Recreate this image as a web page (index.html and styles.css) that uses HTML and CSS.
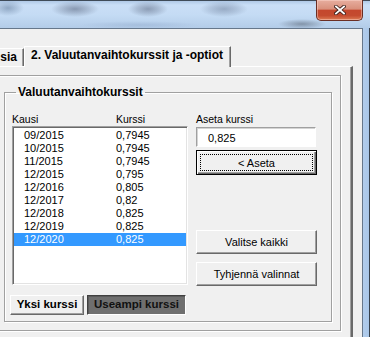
FILE: index.html
```html
<!DOCTYPE html>
<html lang="fi">
<head>
    <meta charset="UTF-8">
    <meta name="viewport" content="width=device-width, initial-scale=1.0">
    <title>Valuutanvaihtokurssit</title>
    <link rel="stylesheet" href="styles.css">
</head>
<body>
    <div class="window">
        <div class="titlebar">
            <div class="close-btn">
                <svg width="12" height="10" viewBox="0 0 12 10">
                    <path d="M2 1.5 L10 8.5 M10 1.5 L2 8.5" stroke="#3b1d18" stroke-width="3.6" stroke-linecap="square" fill="none"/>
                    <path d="M2 1.5 L10 8.5 M10 1.5 L2 8.5" stroke="#fff" stroke-width="1.9" stroke-linecap="square" fill="none"/>
                </svg>
            </div>
        </div>
        <div class="window-body">
            <div class="client">
                <div class="tab-strip">
                    <div class="tab tab-back">isia</div>
                    <div class="tab tab-active">2. Valuutanvaihtokurssit ja -optiot</div>
                </div>
                <div class="tab-page">
                    <div class="frame">
                        <fieldset class="group">
                            <legend>Valuutanvaihtokurssit</legend>
                            <div class="group-body">
                                <div class="rates">
                                    <div class="rates-head"><span>Kausi</span><span>Kurssi</span></div>
                                    <div class="listbox">
                                        <div class="row"><span>09/2015</span><span>0,7945</span></div>
                                        <div class="row"><span>10/2015</span><span>0,7945</span></div>
                                        <div class="row"><span>11/2015</span><span>0,7945</span></div>
                                        <div class="row"><span>12/2015</span><span>0,795</span></div>
                                        <div class="row"><span>12/2016</span><span>0,805</span></div>
                                        <div class="row"><span>12/2017</span><span>0,82</span></div>
                                        <div class="row"><span>12/2018</span><span>0,825</span></div>
                                        <div class="row"><span>12/2019</span><span>0,825</span></div>
                                        <div class="row selected"><span>12/2020</span><span>0,825</span></div>
                                    </div>
                                    <div class="mode-buttons">
                                        <button class="mode-btn">Yksi kurssi</button>
                                        <button class="mode-btn pressed">Useampi kurssi</button>
                                    </div>
                                </div>
                                <div class="actions">
                                    <label class="field-label" for="rate">Aseta kurssi</label>
                                    <input type="text" id="rate" class="textbox" value="0,825">
                                    <button class="btn btn-default">&lt; Aseta</button>
                                    <button class="btn btn-select">Valitse kaikki</button>
                                    <button class="btn btn-clear">Tyhjennä valinnat</button>
                                </div>
                            </div>
                        </fieldset>
                    </div>
                </div>
            </div>
            <div class="window-edge"></div>
        </div>
    </div>
</body>
</html>
```

FILE: styles.css
```css
/* Classic Windows dialog look */
* {
    box-sizing: border-box;
}

html, body {
    margin: 0;
    padding: 0;
}

body {
    width: 370px;
    height: 337px;
    overflow: hidden;
    background: #f0f0f0;
    font-family: "Liberation Sans", Arial, sans-serif;
    font-size: 11px;
    color: #000;
}

/* window starts left of the visible area */
.window {
    width: 390px;
    margin-left: -20px;
}

/* blurred glass title bar */
.titlebar {
    height: 28px;
    display: flex;
    justify-content: flex-end;
    padding-right: 7px;
    box-shadow: inset 0 1px 0 #3f4b58;
    background:
        radial-gradient(ellipse 16px 8px at 28px 8px, rgba(120, 145, 175, 0.7), rgba(120, 145, 175, 0.35) 50%, transparent),
        radial-gradient(ellipse 24px 8px at 95px 9px, rgba(115, 130, 155, 0.75), rgba(115, 130, 155, 0.35) 55%, transparent),
        radial-gradient(ellipse 20px 8px at 168px 9px, rgba(115, 130, 155, 0.7), rgba(115, 130, 155, 0.35) 55%, transparent),
        radial-gradient(ellipse 24px 8px at 244px 9px, rgba(120, 138, 165, 0.6), rgba(120, 138, 165, 0.3) 55%, transparent),
        radial-gradient(ellipse 24px 5px at 322px 24px, rgba(95, 108, 125, 0.6), transparent),
        radial-gradient(ellipse 60px 4px at 160px 25px, rgba(140, 165, 200, 0.4), transparent),
        linear-gradient(#a9c3e2, #c9def6 5px, #c4dbf4 15px, #b4cde9 27px);
}

.close-btn {
    width: 47px;
    height: 21px;
    display: flex;
    align-items: center;
    justify-content: center;
    border: 1px solid #6a2e24;
    border-top: none;
    border-radius: 0 0 5px 5px;
    background: linear-gradient(#e7ae9f 0%, #d9907c 45%, #c4472d 52%, #c44b2f 78%, #dd7c55 100%);
    box-shadow: inset 0 0 0 1px rgba(255, 220, 210, 0.45);
}

.window-body {
    display: flex;
    height: 309px;
}

.client {
    flex: 1;
    border-top: 1px solid #66778b;
    border-right: 1px solid #66778b;
    background: #f0f0f0;
    padding: 17px 9px 0 0;
    overflow: hidden;
}

.window-edge {
    width: 7px;
    background: linear-gradient(to right, #b2cdec 0, #a9c6e8 6px, #37414d 6px);
}

/* Tabs */
.tab-strip {
    display: flex;
    align-items: flex-end;
    height: 20px;
    margin-left: 6px;
}

.tab {
    border: 1px solid #fff;
    border-right: 1px solid #696969;
    border-bottom: none;
    box-shadow: inset -1px 0 0 #a0a0a0;
    background: #f0f0f0;
    font-weight: bold;
    font-size: 12px;
    white-space: nowrap;
}

.tab-back {
    width: 38px;
    height: 18px;
    line-height: 17px;
    text-align: right;
    padding-right: 6px;
}

.tab-active {
    position: relative;
    z-index: 1;
    height: 21px;
    margin-bottom: -1px;
    line-height: 16px;
    padding: 0 7px 0 6px;
}

.tab-page {
    margin-left: 4px;
    height: 300px;
    border-top: 1px solid #fff;
    border-left: 1px solid #fff;
    border-right: 2px solid #696969;
    box-shadow: inset -1px 0 0 #a0a0a0;
    padding-top: 8px;
}

/* etched borders */
.frame,
.group {
    border: 1px solid #a0a0a0;
    box-shadow: inset 1px 1px 0 #fff, 1px 1px 0 #fff;
}

.frame {
    margin: 0 10px 10px 10px;
}

.group {
    margin: 9px 8px 8px 8px;
    padding: 0 0 6px 7px;
    min-width: 0;
}

.group legend {
    margin-left: 4px;
    padding: 0 2px;
    font-weight: bold;
    font-size: 12px;
    line-height: 14px;
}

.group-body {
    display: grid;
    grid-template-columns: 176px 121px;
    column-gap: 8px;
    padding-top: 13px;
}

/* list side */
.rates-head {
    display: grid;
    grid-template-columns: 104px auto;
    height: 14px;
    line-height: 14px;
    font-size: 10.5px;
}

.listbox {
    height: 159px;
    background: #fff;
    border: 1px solid;
    border-color: #a0a0a0 #fff #fff #a0a0a0;
    box-shadow: inset 1px 1px 0 #696969, inset -1px -1px 0 #e3e3e3;
    padding: 2px 1px 1px 1px;
}

.row {
    display: grid;
    grid-template-columns: 92px auto;
    height: 13px;
    line-height: 13px;
    padding-left: 10px;
}

.row.selected {
    background: #3399ff;
    color: #fff;
}

.mode-buttons {
    display: flex;
    gap: 3px;
    margin: 10px 0 0 -2px;
}

.mode-btn {
    height: 20px;
    padding: 0 0 1px 0;
    font-family: inherit;
    font-size: 11.5px;
    font-weight: bold;
    line-height: 17px;
    color: #000;
    background: #f0f0f0;
    border: 1px solid;
    border-color: #fff #696969 #696969 #fff;
    box-shadow: inset -1px -1px 0 #a0a0a0;
}

.mode-btn:first-child {
    width: 74px;
}

.mode-btn.pressed {
    width: 99px;
    background: #6f6f6f;
    color: #111;
    border-color: #404040 #fff #fff #404040;
    box-shadow: inset 1px 1px 0 #5a5a5a;
}

/* right side */
.actions {
    display: flex;
    flex-direction: column;
}

.field-label {
    height: 14px;
    line-height: 14px;
    font-size: 10.5px;
}

.textbox {
    width: 120px;
    height: 20px;
    margin-top: 1px;
    padding: 1px 0 0 11px;
    font-family: inherit;
    font-size: 11px;
    color: #000;
    background: #fff;
    border: 1px solid;
    border-color: #a0a0a0 #fff #fff #a0a0a0;
    box-shadow: inset 1px 1px 0 #d4d4d4;
    outline: none;
}

.btn {
    height: 24px;
    padding: 0;
    font-family: inherit;
    font-size: 11px;
    color: #000;
    background: #f0f0f0;
    border: 1px solid;
    border-color: #fff #696969 #696969 #fff;
    box-shadow: inset -1px -1px 0 #a0a0a0;
}

.btn-default {
    height: 25px;
    margin-top: 3px;
    border: 1px solid #000;
    box-shadow: inset 1px 1px 0 #fff, inset -1px -1px 0 #696969, inset -2px -2px 0 #a0a0a0;
    outline: 1px dotted #000;
    outline-offset: -5px;
}

.btn-select {
    margin-top: 55px;
}

.btn-clear {
    margin-top: 8px;
}
```
